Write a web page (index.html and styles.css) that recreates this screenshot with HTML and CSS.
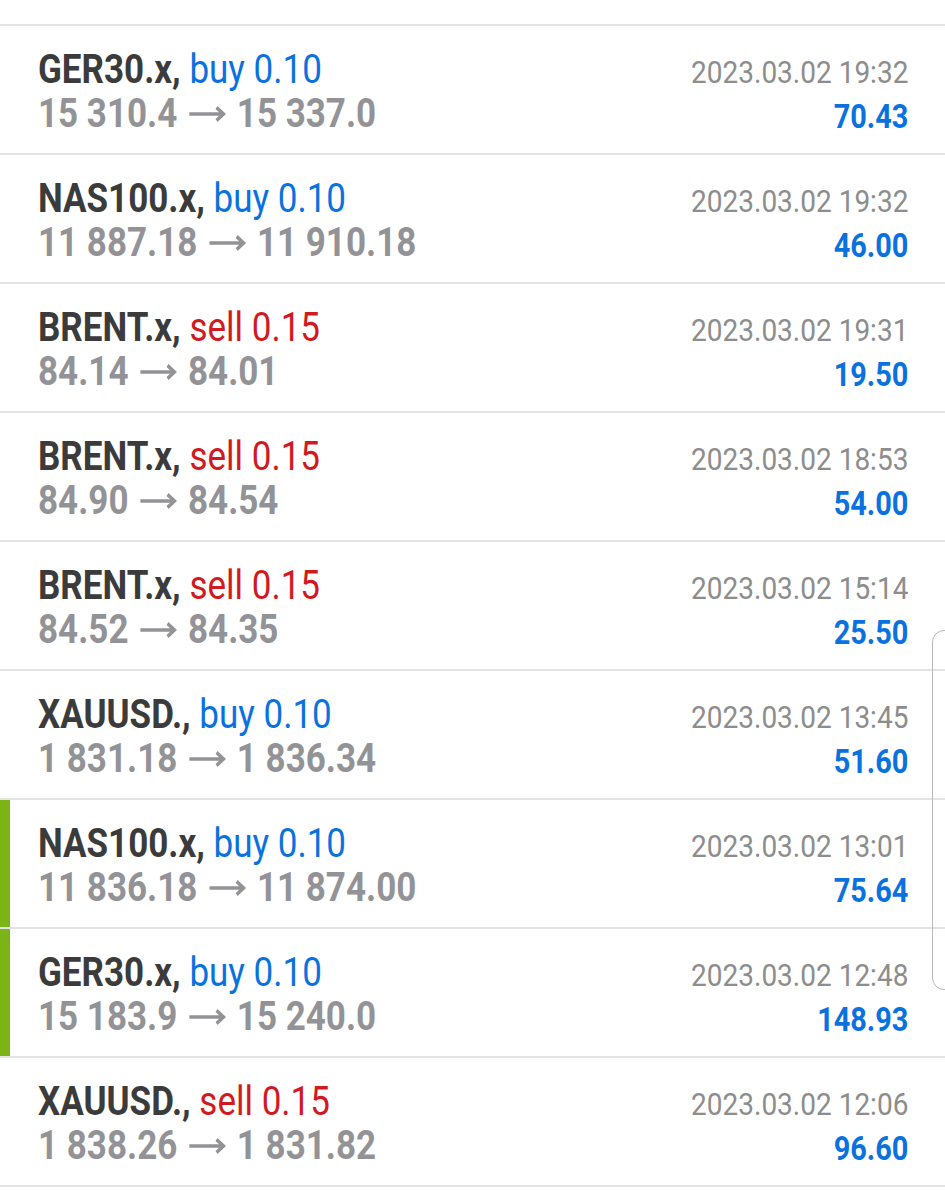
FILE: index.html
```html
<!DOCTYPE html>
<html>
<head>
<meta charset="utf-8">
<link rel="stylesheet" href="styles.css">
</head>
<body>
<div class="list">
  <div class="row">
    <div class="left">
      <div class="title"><span class="sym">GER30.x,</span> <span class="buy">buy 0.10</span></div>
      <div class="prices">15 310.4<svg class="arrow" viewBox="0 0 43 16"><path d="M1 8H40M32 1.5L40 8L32 14.5"/></svg>15 337.0</div>
    </div>
    <div class="right">
      <div class="date">2023.03.02 19:32</div>
      <div class="profit">70.43</div>
    </div>
  </div>
  <div class="row">
    <div class="left">
      <div class="title"><span class="sym">NAS100.x,</span> <span class="buy">buy 0.10</span></div>
      <div class="prices">11 887.18<svg class="arrow" viewBox="0 0 43 16"><path d="M1 8H40M32 1.5L40 8L32 14.5"/></svg>11 910.18</div>
    </div>
    <div class="right">
      <div class="date">2023.03.02 19:32</div>
      <div class="profit">46.00</div>
    </div>
  </div>
  <div class="row">
    <div class="left">
      <div class="title"><span class="sym">BRENT.x,</span> <span class="sell">sell 0.15</span></div>
      <div class="prices">84.14<svg class="arrow" viewBox="0 0 43 16"><path d="M1 8H40M32 1.5L40 8L32 14.5"/></svg>84.01</div>
    </div>
    <div class="right">
      <div class="date">2023.03.02 19:31</div>
      <div class="profit">19.50</div>
    </div>
  </div>
  <div class="row">
    <div class="left">
      <div class="title"><span class="sym">BRENT.x,</span> <span class="sell">sell 0.15</span></div>
      <div class="prices">84.90<svg class="arrow" viewBox="0 0 43 16"><path d="M1 8H40M32 1.5L40 8L32 14.5"/></svg>84.54</div>
    </div>
    <div class="right">
      <div class="date">2023.03.02 18:53</div>
      <div class="profit">54.00</div>
    </div>
  </div>
  <div class="row">
    <div class="left">
      <div class="title"><span class="sym">BRENT.x,</span> <span class="sell">sell 0.15</span></div>
      <div class="prices">84.52<svg class="arrow" viewBox="0 0 43 16"><path d="M1 8H40M32 1.5L40 8L32 14.5"/></svg>84.35</div>
    </div>
    <div class="right">
      <div class="date">2023.03.02 15:14</div>
      <div class="profit">25.50</div>
    </div>
  </div>
  <div class="row">
    <div class="left">
      <div class="title"><span class="sym">XAUUSD.,</span> <span class="buy">buy 0.10</span></div>
      <div class="prices">1 831.18<svg class="arrow" viewBox="0 0 43 16"><path d="M1 8H40M32 1.5L40 8L32 14.5"/></svg>1 836.34</div>
    </div>
    <div class="right">
      <div class="date">2023.03.02 13:45</div>
      <div class="profit">51.60</div>
    </div>
  </div>
  <div class="row marked">
    <div class="left">
      <div class="title"><span class="sym">NAS100.x,</span> <span class="buy">buy 0.10</span></div>
      <div class="prices">11 836.18<svg class="arrow" viewBox="0 0 43 16"><path d="M1 8H40M32 1.5L40 8L32 14.5"/></svg>11 874.00</div>
    </div>
    <div class="right">
      <div class="date">2023.03.02 13:01</div>
      <div class="profit">75.64</div>
    </div>
  </div>
  <div class="row marked">
    <div class="left">
      <div class="title"><span class="sym">GER30.x,</span> <span class="buy">buy 0.10</span></div>
      <div class="prices">15 183.9<svg class="arrow" viewBox="0 0 43 16"><path d="M1 8H40M32 1.5L40 8L32 14.5"/></svg>15 240.0</div>
    </div>
    <div class="right">
      <div class="date">2023.03.02 12:48</div>
      <div class="profit">148.93</div>
    </div>
  </div>
  <div class="row">
    <div class="left">
      <div class="title"><span class="sym">XAUUSD.,</span> <span class="sell">sell 0.15</span></div>
      <div class="prices">1 838.26<svg class="arrow" viewBox="0 0 43 16"><path d="M1 8H40M32 1.5L40 8L32 14.5"/></svg>1 831.82</div>
    </div>
    <div class="right">
      <div class="date">2023.03.02 12:06</div>
      <div class="profit">96.60</div>
    </div>
  </div>
  <div class="scrollbar"></div>
</div>
</body>
</html>
```

FILE: styles.css
```css
html, body {
  margin: 0;
  padding: 0;
  background: #ffffff;
}
body {
  font-family: Roboto, "Noto Sans", sans-serif;
  width: 945px;
  height: 1200px;
  overflow: hidden;
}
.list {
  position: relative;
  padding-top: 24px;
}
.list > .row:first-child {
  border-top: 2px solid #e3e3e3;
}
.row {
  height: 127px;
  border-bottom: 2px solid #e3e3e3;
  display: flex;
  justify-content: space-between;
  align-items: flex-start;
  padding: 0 37px 0 38px;
  box-sizing: content-box;
}
.row.marked {
  box-shadow: inset 10px 0 0 #7bb416;
}
.left, .right {
  display: flex;
  flex-direction: column;
}
.left {
  padding-top: 22px;
  transform: scaleX(0.875);
  transform-origin: left top;
}
.right {
  align-items: flex-end;
  padding-top: 24px;
  transform: scaleX(0.875);
  transform-origin: right top;
}
.title {
  font-size: 40px;
  line-height: 44px;
  white-space: nowrap;
}
.sym {
  font-weight: 700;
  color: #3b3b3b;
}
.buy {
  color: #0a72df;
}
.sell {
  color: #d11a1f;
}
.prices {
  font-size: 40px;
  line-height: 44px;
  font-weight: 700;
  color: #939397;
  white-space: nowrap;
  display: flex;
  align-items: center;
}
.arrow {
  width: 43px;
  height: 16px;
  margin: 0 12px 0 13px;
  fill: none;
  stroke: #939397;
  stroke-width: 3.6;
  stroke-linecap: butt;
  stroke-linejoin: miter;
}
.date {
  font-size: 32px;
  line-height: 44px;
  color: #8d8d8d;
}
.profit {
  font-size: 33px;
  line-height: 45px;
  font-weight: 700;
  color: #0a72df;
}
.scrollbar {
  position: absolute;
  left: 932px;
  top: 630px;
  width: 40px;
  height: 360px;
  border: 1.5px solid #b9b9b9;
  border-radius: 12px;
  box-sizing: border-box;
}
```
